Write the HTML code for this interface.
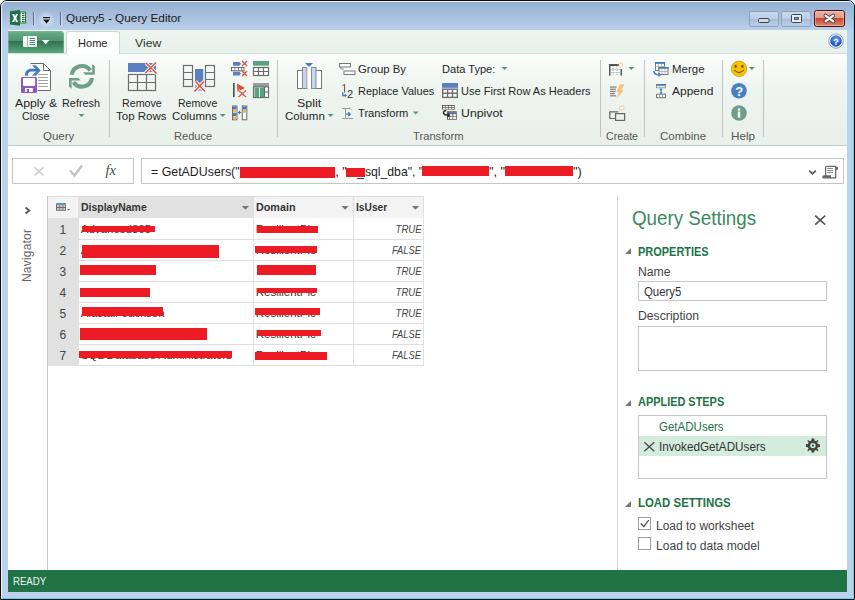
<!DOCTYPE html>
<html><head><meta charset="utf-8"><style>
*{margin:0;padding:0;box-sizing:border-box}
html,body{width:855px;height:600px;overflow:hidden;background:#fff;font-family:"Liberation Sans",sans-serif;color:#222}
.a{position:absolute}
.t{position:absolute;white-space:nowrap;line-height:1}
</style></head><body>
<div class="a" style="left:0px;top:0px;width:855px;height:600px;background:#bcd1ea;border:1px solid #0a0a0a;border-radius:7px 7px 0 0"></div>
<div class="a" style="left:1px;top:1px;width:853px;height:598px;border-left:1px solid #eef4fb;border-top:1px solid #eef4fb;border-right:1px solid #45dcfa;border-bottom:1px solid #45dcfa;border-radius:6px 6px 0 0"></div>
<div class="a" style="left:2px;top:2px;width:851px;height:28px;background:linear-gradient(#94afd1,#bad0ea);border-radius:5px 5px 0 0"></div>
<div class="a" style="left:8px;top:30px;width:839px;height:23px;background:linear-gradient(#ecf5ef,#e7f0ea)"></div>
<div class="a" style="left:8px;top:53px;width:839px;height:93px;background:linear-gradient(#fbfdfc,#eef4f0 40%,#e9f0eb);border-top:1px solid #cfe2d5;border-bottom:1px solid #b6d3bf"></div>
<div class="a" style="left:8px;top:146px;width:839px;height:424px;background:#fff"></div>
<div class="a" style="left:8px;top:570px;width:839px;height:22px;background:#217346"></div>
<div id="t0" class="t" style="left:65.90px;top:12.20px;font-size:11.7px;color:#1a1a1a;font-weight:normal;font-style:normal;transform:scaleX(1.0082);transform-origin:0 0;">Query5 - Query Editor</div>
<div class="a" style="left:66px;top:31px;width:54px;height:23px;background:#fff;border:1px solid #c8dccf;border-bottom:none;border-radius:3px 3px 0 0"></div>
<div id="t1" class="t" style="left:77.90px;top:38.07px;font-size:11.5px;color:#262626;font-weight:normal;font-style:normal;transform:scaleX(0.9611);transform-origin:0 0;">Home</div>
<div id="t2" class="t" style="left:135.20px;top:38.07px;font-size:11.5px;color:#333;font-weight:normal;font-style:normal;transform:scaleX(1.0640);transform-origin:0 0;">View</div>
<div id="t3" class="t" style="left:15.20px;top:97.99px;font-size:11px;color:#262626;font-weight:normal;font-style:normal;transform:scaleX(1.1102);transform-origin:0 0;">Apply &amp;</div>
<div id="t4" class="t" style="left:22.10px;top:110.99px;font-size:11px;color:#262626;font-weight:normal;font-style:normal;transform:scaleX(0.9766);transform-origin:0 0;">Close</div>
<div id="t5" class="t" style="left:62.10px;top:97.99px;font-size:11px;color:#262626;font-weight:normal;font-style:normal;transform:scaleX(0.9882);transform-origin:0 0;">Refresh</div>
<div id="t6" class="t" style="left:43.10px;top:131.29px;font-size:11px;color:#555;font-weight:normal;font-style:normal;transform:scaleX(1.0456);transform-origin:0 0;">Query</div>
<div id="t7" class="t" style="left:121.90px;top:97.99px;font-size:11px;color:#262626;font-weight:normal;font-style:normal;transform:scaleX(0.9705);transform-origin:0 0;">Remove</div>
<div id="t8" class="t" style="left:116.40px;top:110.99px;font-size:11px;color:#262626;font-weight:normal;font-style:normal;transform:scaleX(1.0442);transform-origin:0 0;">Top Rows</div>
<div id="t9" class="t" style="left:177.80px;top:97.99px;font-size:11px;color:#262626;font-weight:normal;font-style:normal;transform:scaleX(0.9580);transform-origin:0 0;">Remove</div>
<div id="t10" class="t" style="left:172.20px;top:110.99px;font-size:11px;color:#262626;font-weight:normal;font-style:normal;transform:scaleX(1.0350);transform-origin:0 0;">Columns</div>
<div id="t11" class="t" style="left:173.80px;top:131.29px;font-size:11px;color:#555;font-weight:normal;font-style:normal;transform:scaleX(1.0073);transform-origin:0 0;">Reduce</div>
<div id="t12" class="t" style="left:296.90px;top:97.99px;font-size:11px;color:#262626;font-weight:normal;font-style:normal;transform:scaleX(1.1266);transform-origin:0 0;">Split</div>
<div id="t13" class="t" style="left:285.00px;top:110.99px;font-size:11px;color:#262626;font-weight:normal;font-style:normal;transform:scaleX(1.0510);transform-origin:0 0;">Column</div>
<div id="t14" class="t" style="left:358.40px;top:64.49px;font-size:11px;color:#262626;font-weight:normal;font-style:normal;transform:scaleX(1.0334);transform-origin:0 0;">Group By</div>
<div id="t15" class="t" style="left:358.40px;top:86.19px;font-size:11px;color:#262626;font-weight:normal;font-style:normal;transform:scaleX(1.0007);transform-origin:0 0;">Replace Values</div>
<div id="t16" class="t" style="left:358.40px;top:108.19px;font-size:11px;color:#262626;font-weight:normal;font-style:normal;transform:scaleX(1.0138);transform-origin:0 0;">Transform</div>
<div id="t17" class="t" style="left:441.70px;top:64.49px;font-size:11px;color:#262626;font-weight:normal;font-style:normal;transform:scaleX(1.0056);transform-origin:0 0;">Data Type:</div>
<div id="t18" class="t" style="left:460.80px;top:86.19px;font-size:11px;color:#262626;font-weight:normal;font-style:normal;transform:scaleX(1.0047);transform-origin:0 0;">Use First Row As Headers</div>
<div id="t19" class="t" style="left:460.80px;top:108.19px;font-size:11px;color:#262626;font-weight:normal;font-style:normal;transform:scaleX(1.1182);transform-origin:0 0;">Unpivot</div>
<div id="t20" class="t" style="left:412.60px;top:131.29px;font-size:11px;color:#555;font-weight:normal;font-style:normal;transform:scaleX(1.0179);transform-origin:0 0;">Transform</div>
<div id="t21" class="t" style="left:606.30px;top:131.29px;font-size:11px;color:#555;font-weight:normal;font-style:normal;transform:scaleX(0.9706);transform-origin:0 0;">Create</div>
<div id="t22" class="t" style="left:671.80px;top:64.49px;font-size:11px;color:#262626;font-weight:normal;font-style:normal;transform:scaleX(1.0431);transform-origin:0 0;">Merge</div>
<div id="t23" class="t" style="left:671.80px;top:86.19px;font-size:11px;color:#262626;font-weight:normal;font-style:normal;transform:scaleX(1.0907);transform-origin:0 0;">Append</div>
<div id="t24" class="t" style="left:659.90px;top:131.29px;font-size:11px;color:#555;font-weight:normal;font-style:normal;transform:scaleX(1.0455);transform-origin:0 0;">Combine</div>
<div id="t25" class="t" style="left:730.50px;top:131.29px;font-size:11px;color:#555;font-weight:normal;font-style:normal;transform:scaleX(1.0677);transform-origin:0 0;">Help</div>
<div class="a" style="left:109px;top:60px;width:1px;height:77px;background:#bec4c1"></div>
<div class="a" style="left:277px;top:60px;width:1px;height:77px;background:#bec4c1"></div>
<div class="a" style="left:600px;top:60px;width:1px;height:77px;background:#bec4c1"></div>
<div class="a" style="left:644px;top:60px;width:1px;height:77px;background:#bec4c1"></div>
<div class="a" style="left:722px;top:60px;width:1px;height:77px;background:#bec4c1"></div>
<div class="a" style="left:763px;top:60px;width:1px;height:77px;background:#bec4c1"></div>
<div class="a" style="left:12px;top:158px;width:122px;height:26px;border:1px solid #c6c6c6;background:#fff"></div>
<div class="a" style="left:141px;top:158px;width:703px;height:26px;border:1px solid #c6c6c6;background:#fff"></div>
<div id="t26" class="t" style="left:151.40px;top:165.96px;font-size:12.8px;color:#1e1e1e;font-weight:normal;font-style:normal;transform:scaleX(0.9668);transform-origin:0 0;">= GetADUsers(&quot;</div>
<div id="t27" class="t" style="left:335.20px;top:165.96px;font-size:12.8px;color:#1e1e1e;font-weight:normal;font-style:normal;">, &quot;</div>
<div id="t28" class="t" style="left:356.90px;top:165.96px;font-size:12.8px;color:#1e1e1e;font-weight:normal;font-style:normal;">_</div>
<div id="t29" class="t" style="left:364.50px;top:165.96px;font-size:12.8px;color:#1e1e1e;font-weight:normal;font-style:normal;transform:scaleX(0.9519);transform-origin:0 0;">sql_dba&quot;, &quot;</div>
<div id="t30" class="t" style="left:488.90px;top:165.96px;font-size:12.8px;color:#1e1e1e;font-weight:normal;font-style:normal;">&quot;, &quot;</div>
<div id="t31" class="t" style="left:573.00px;top:165.96px;font-size:12.8px;color:#1e1e1e;font-weight:normal;font-style:normal;">&quot;)</div>
<div class="a" style="left:240px;top:167px;width:95px;height:11px;background:#ed1c24"></div>
<div class="a" style="left:346px;top:168px;width:19px;height:8.5px;background:#ed1c24"></div>
<div class="a" style="left:422px;top:166px;width:67px;height:10px;background:#ed1c24"></div>
<div class="a" style="left:505px;top:166px;width:68px;height:10px;background:#ed1c24"></div>
<div class="a" style="left:47px;top:196px;width:1px;height:374px;background:#c6c6c6"></div>
<div class="a" style="left:48px;top:196px;width:376px;height:1px;background:#dcdcdc"></div>
<div class="a" style="left:48px;top:197px;width:30px;height:21px;background:#f3f3f3"></div>
<div class="a" style="left:78px;top:197px;width:175px;height:21px;background:#e1e1e1"></div>
<div class="a" style="left:254px;top:197px;width:170px;height:21px;background:#f3f3f3"></div>
<div class="a" style="left:48px;top:218px;width:31px;height:148px;background:#e1e1e1"></div>
<div class="a" style="left:79px;top:239px;width:345px;height:1px;background:#dedede"></div>
<div class="a" style="left:79px;top:260px;width:345px;height:1px;background:#dedede"></div>
<div class="a" style="left:79px;top:281px;width:345px;height:1px;background:#dedede"></div>
<div class="a" style="left:79px;top:302px;width:345px;height:1px;background:#dedede"></div>
<div class="a" style="left:79px;top:323px;width:345px;height:1px;background:#dedede"></div>
<div class="a" style="left:79px;top:344px;width:345px;height:1px;background:#dedede"></div>
<div class="a" style="left:79px;top:365px;width:345px;height:1px;background:#dedede"></div>
<div class="a" style="left:253px;top:197px;width:1px;height:168px;background:#e0e0e0"></div>
<div class="a" style="left:353px;top:197px;width:1px;height:168px;background:#e0e0e0"></div>
<div class="a" style="left:423px;top:197px;width:1px;height:168px;background:#e0e0e0"></div>
<div id="t32" class="t" style="left:80.80px;top:202.49px;font-size:11px;color:#333;font-weight:bold;font-style:normal;transform:scaleX(0.9515);transform-origin:0 0;">DisplayName</div>
<div id="t33" class="t" style="left:255.70px;top:202.49px;font-size:11px;color:#333;font-weight:bold;font-style:normal;transform:scaleX(0.9783);transform-origin:0 0;">Domain</div>
<div id="t34" class="t" style="left:355.90px;top:202.49px;font-size:11px;color:#333;font-weight:bold;font-style:normal;transform:scaleX(0.9280);transform-origin:0 0;">IsUser</div>
<div id="t35" class="t" style="left:59.40px;top:224.24px;font-size:12px;color:#444;font-weight:normal;font-style:normal;">1</div>
<div id="t36" class="t" style="right:433.60px;top:223.73px;font-size:11.3px;color:#444;font-weight:normal;font-style:italic;transform:scaleX(0.8538);transform-origin:100% 0;">TRUE</div>
<div id="t37" class="t" style="left:80.80px;top:224.37px;font-size:11.5px;color:#333;font-weight:normal;font-style:normal;">Advanced365</div>
<div id="t38" class="t" style="left:255.70px;top:224.37px;font-size:11.5px;color:#333;font-weight:normal;font-style:normal;">ResilientPlc</div>
<div id="t39" class="t" style="left:59.40px;top:245.24px;font-size:12px;color:#444;font-weight:normal;font-style:normal;">2</div>
<div id="t40" class="t" style="right:433.60px;top:244.73px;font-size:11.3px;color:#444;font-weight:normal;font-style:italic;transform:scaleX(0.8251);transform-origin:100% 0;">FALSE</div>
<div id="t41" class="t" style="left:80.80px;top:245.37px;font-size:11.5px;color:#333;font-weight:normal;font-style:normal;">Administrator of domain</div>
<div id="t42" class="t" style="left:255.70px;top:245.37px;font-size:11.5px;color:#333;font-weight:normal;font-style:normal;">ResilientPlc</div>
<div id="t43" class="t" style="left:59.40px;top:266.24px;font-size:12px;color:#444;font-weight:normal;font-style:normal;">3</div>
<div id="t44" class="t" style="right:433.60px;top:265.73px;font-size:11.3px;color:#444;font-weight:normal;font-style:italic;transform:scaleX(0.8538);transform-origin:100% 0;">TRUE</div>
<div id="t45" class="t" style="left:80.80px;top:266.37px;font-size:11.5px;color:#333;font-weight:normal;font-style:normal;"></div>
<div id="t46" class="t" style="left:255.70px;top:266.37px;font-size:11.5px;color:#333;font-weight:normal;font-style:normal;"></div>
<div id="t47" class="t" style="left:59.40px;top:287.24px;font-size:12px;color:#444;font-weight:normal;font-style:normal;">4</div>
<div id="t48" class="t" style="right:433.60px;top:286.73px;font-size:11.3px;color:#444;font-weight:normal;font-style:italic;transform:scaleX(0.8538);transform-origin:100% 0;">TRUE</div>
<div id="t49" class="t" style="left:80.80px;top:287.37px;font-size:11.5px;color:#333;font-weight:normal;font-style:normal;"></div>
<div id="t50" class="t" style="left:255.70px;top:287.37px;font-size:11.5px;color:#333;font-weight:normal;font-style:normal;">ResilientPlc</div>
<div id="t51" class="t" style="left:59.40px;top:308.24px;font-size:12px;color:#444;font-weight:normal;font-style:normal;">5</div>
<div id="t52" class="t" style="right:433.60px;top:307.73px;font-size:11.3px;color:#444;font-weight:normal;font-style:italic;transform:scaleX(0.8538);transform-origin:100% 0;">TRUE</div>
<div id="t53" class="t" style="left:80.80px;top:308.37px;font-size:11.5px;color:#333;font-weight:normal;font-style:normal;">Alastair Jackson</div>
<div id="t54" class="t" style="left:255.70px;top:308.37px;font-size:11.5px;color:#333;font-weight:normal;font-style:normal;">ResilientPlc</div>
<div id="t55" class="t" style="left:59.40px;top:329.24px;font-size:12px;color:#444;font-weight:normal;font-style:normal;">6</div>
<div id="t56" class="t" style="right:433.60px;top:328.73px;font-size:11.3px;color:#444;font-weight:normal;font-style:italic;transform:scaleX(0.8251);transform-origin:100% 0;">FALSE</div>
<div id="t57" class="t" style="left:80.80px;top:329.37px;font-size:11.5px;color:#333;font-weight:normal;font-style:normal;"></div>
<div id="t58" class="t" style="left:255.70px;top:329.37px;font-size:11.5px;color:#333;font-weight:normal;font-style:normal;">ResilientPlc</div>
<div id="t59" class="t" style="left:59.40px;top:350.24px;font-size:12px;color:#444;font-weight:normal;font-style:normal;">7</div>
<div id="t60" class="t" style="right:433.60px;top:349.73px;font-size:11.3px;color:#444;font-weight:normal;font-style:italic;transform:scaleX(0.8251);transform-origin:100% 0;">FALSE</div>
<div id="t61" class="t" style="left:80.80px;top:350.37px;font-size:11.5px;color:#333;font-weight:normal;font-style:normal;">SQL Database Administrators</div>
<div id="t62" class="t" style="left:255.70px;top:350.37px;font-size:11.5px;color:#333;font-weight:normal;font-style:normal;">ResilientPlc</div>
<div class="a" style="left:82px;top:226px;width:73px;height:6px;background:#ed1c24"></div>
<div class="a" style="left:82px;top:245px;width:137px;height:13px;background:#ed1c24"></div>
<div class="a" style="left:80px;top:265px;width:76px;height:10px;background:#ed1c24"></div>
<div class="a" style="left:80px;top:288px;width:70px;height:9px;background:#ed1c24"></div>
<div class="a" style="left:82px;top:307px;width:81px;height:9px;background:#ed1c24"></div>
<div class="a" style="left:80px;top:328px;width:127px;height:12px;background:#ed1c24"></div>
<div class="a" style="left:79px;top:351px;width:153px;height:7px;background:#ed1c24"></div>
<div class="a" style="left:257px;top:226px;width:61px;height:7px;background:#ed1c24"></div>
<div class="a" style="left:255px;top:246px;width:62px;height:7px;background:#ed1c24"></div>
<div class="a" style="left:257px;top:265px;width:59px;height:10px;background:#ed1c24"></div>
<div class="a" style="left:257px;top:288px;width:60px;height:5px;background:#ed1c24"></div>
<div class="a" style="left:255px;top:308px;width:65px;height:7px;background:#ed1c24"></div>
<div class="a" style="left:258px;top:330px;width:63px;height:6px;background:#ed1c24"></div>
<div class="a" style="left:255px;top:352px;width:72px;height:8px;background:#ed1c24"></div>
<div class="t" style="left:21.3px;top:281.6px;font-size:12px;letter-spacing:.2px;color:#666;transform-origin:0 0;transform:rotate(-90deg)">Navigator</div>
<div class="a" style="left:617px;top:196px;width:1px;height:374px;background:#d4d4d4"></div>
<div id="t63" class="t" style="left:632.40px;top:208.79px;font-size:19.5px;color:#3d8a5c;font-weight:normal;font-style:normal;transform:scaleX(0.9620);transform-origin:0 0;">Query Settings</div>
<div id="t64" class="t" style="left:638.30px;top:245.84px;font-size:12px;color:#217346;font-weight:bold;font-style:normal;transform:scaleX(0.9137);transform-origin:0 0;">PROPERTIES</div>
<div id="t65" class="t" style="left:638.30px;top:266.19px;font-size:12.3px;color:#444;font-weight:normal;font-style:normal;transform:scaleX(0.9935);transform-origin:0 0;">Name</div>
<div class="a" style="left:638px;top:281px;width:189px;height:20px;border:1px solid #c6c6c6;background:#fff"></div>
<div id="t66" class="t" style="left:643.50px;top:286.22px;font-size:12.5px;color:#333;font-weight:normal;font-style:normal;transform:scaleX(0.9103);transform-origin:0 0;">Query5</div>
<div id="t67" class="t" style="left:638.30px;top:309.89px;font-size:12.3px;color:#444;font-weight:normal;font-style:normal;transform:scaleX(0.9932);transform-origin:0 0;">Description</div>
<div class="a" style="left:638px;top:326px;width:189px;height:45px;border:1px solid #c6c6c6;background:#fff"></div>
<div id="t68" class="t" style="left:638.30px;top:396.34px;font-size:12px;color:#217346;font-weight:bold;font-style:normal;transform:scaleX(0.9102);transform-origin:0 0;">APPLIED STEPS</div>
<div class="a" style="left:638px;top:415px;width:189px;height:64px;border:1px solid #c6c6c6;background:#fff"></div>
<div class="a" style="left:639px;top:436px;width:187px;height:20px;background:#d3ecdd"></div>
<div id="t69" class="t" style="left:658.80px;top:421.12px;font-size:12.5px;color:#217346;font-weight:normal;font-style:normal;transform:scaleX(0.9213);transform-origin:0 0;">GetADUsers</div>
<div id="t70" class="t" style="left:658.80px;top:440.92px;font-size:12.5px;color:#333;font-weight:normal;font-style:normal;transform:scaleX(0.9361);transform-origin:0 0;">InvokedGetADUsers</div>
<div id="t71" class="t" style="left:638.30px;top:497.04px;font-size:12px;color:#217346;font-weight:bold;font-style:normal;transform:scaleX(0.9516);transform-origin:0 0;">LOAD SETTINGS</div>
<div class="a" style="left:638px;top:517px;width:13px;height:13px;border:1px solid #a0a0a0;background:#fff"></div>
<div class="a" style="left:638px;top:537px;width:13px;height:13px;border:1px solid #a0a0a0;background:#fff"></div>
<div id="t72" class="t" style="left:656.30px;top:519.72px;font-size:12.5px;color:#444;font-weight:normal;font-style:normal;transform:scaleX(0.9601);transform-origin:0 0;">Load to worksheet</div>
<div id="t73" class="t" style="left:656.30px;top:539.72px;font-size:12.5px;color:#444;font-weight:normal;font-style:normal;transform:scaleX(0.9688);transform-origin:0 0;">Load to data model</div>
<div id="t74" class="t" style="left:13.40px;top:576.49px;font-size:11px;color:#f0f6f2;font-weight:normal;font-style:normal;transform:scaleX(0.8750);transform-origin:0 0;">READY</div>

<svg width="855" height="600" viewBox="0 0 855 600" style="position:absolute;left:0;top:0">
<!-- Excel icon -->
<g>
 <path d="M10 11.2 L20 10 L20 25.8 L10 24.6 Z" fill="#1f7346"/>
 <rect x="19.5" y="11.5" width="6.5" height="12" fill="#1f7346"/>
 <rect x="20.5" y="12.5" width="4.5" height="10" fill="#fff"/>
 <g fill="#1f7346"><rect x="22" y="13" width="2.5" height="1.2"/><rect x="22" y="15" width="2.5" height="1.2"/><rect x="22" y="17" width="2.5" height="1.2"/><rect x="22" y="19" width="2.5" height="1.2"/><rect x="22" y="21" width="2.5" height="1.2"/></g>
 <path d="M12 14 L14.2 14 L15.1 16.3 L16 14 L18 14 L16.2 18 L18.1 22 L16 22 L15.1 19.7 L14.1 22 L12 22 L13.9 18 Z" fill="#fff"/>
</g>
<!-- QAT separators & dropdown -->
<rect x="33" y="12" width="1" height="13" fill="#5c6b7c"/><rect x="34" y="12" width="1" height="13" fill="#dde8f4" opacity=".7"/>
<rect x="60" y="12" width="1" height="13" fill="#5c6b7c"/><rect x="61" y="12" width="1" height="13" fill="#dde8f4" opacity=".7"/>
<defs><radialGradient id="gqat"><stop offset="0" stop-color="#e4eef8" stop-opacity=".8"/><stop offset="1" stop-color="#e4eef8" stop-opacity="0"/></radialGradient></defs><ellipse cx="46.5" cy="19.5" rx="9" ry="9" fill="url(#gqat)"/>
<rect x="43" y="17" width="7" height="1.2" fill="#111"/>
<path d="M43 19.5 L50 19.5 L46.5 23.5 Z" fill="#111"/>
<!-- window buttons -->
<defs>
 <linearGradient id="gbtn" x1="0" y1="0" x2="0" y2="1"><stop offset="0" stop-color="#c9daee"/><stop offset=".5" stop-color="#bccfe7"/><stop offset=".53" stop-color="#a7bedb"/><stop offset="1" stop-color="#bdd1ea"/></linearGradient>
 <linearGradient id="gcls" x1="0" y1="0" x2="0" y2="1"><stop offset="0" stop-color="#efb4a6"/><stop offset=".46" stop-color="#e39a8c"/><stop offset=".48" stop-color="#c6462a"/><stop offset="1" stop-color="#df8a72"/></linearGradient>
 <linearGradient id="gfile" x1="0" y1="0" x2="0" y2="1"><stop offset="0" stop-color="#6aac88"/><stop offset=".45" stop-color="#4f9471"/><stop offset=".47" stop-color="#33714f"/><stop offset="1" stop-color="#5ba87f"/></linearGradient>
 <radialGradient id="ghelp" cx=".5" cy=".35" r=".6"><stop offset="0" stop-color="#6ea6ec"/><stop offset="1" stop-color="#1b4fb3"/></radialGradient>
</defs>
<rect x="749.5" y="11.5" width="29" height="15" rx="2" fill="url(#gbtn)" stroke="#8a9fb9"/>
<rect x="758.5" y="18.5" width="10.5" height="4" rx="1" fill="#d8d8d8" stroke="#3b4656"/>
<rect x="781.5" y="11.5" width="29.5" height="15" rx="2" fill="url(#gbtn)" stroke="#8a9fb9"/>
<rect x="791.5" y="14.5" width="10" height="8" rx="1" fill="#e8eef5" stroke="#3b4656"/>
<rect x="794.5" y="17.5" width="4" height="2" fill="#7b93b3" stroke="#3b4656" stroke-width=".8"/>
<rect x="814.5" y="10.5" width="30" height="16" rx="2.2" fill="url(#gcls)" stroke="#4a1212"/><rect x="815.5" y="11.5" width="28" height="14" rx="1.5" fill="none" stroke="#f6cfc6" stroke-width=".7" opacity=".7"/>
<path d="M825.6 15.6 L833.2 21.2 M833.2 15.6 L825.6 21.2" stroke="#3a3f4c" stroke-width="4" stroke-linecap="round"/>
<path d="M825.6 15.6 L833.2 21.2 M833.2 15.6 L825.6 21.2" stroke="#f6f6f6" stroke-width="2.3" stroke-linecap="round"/>
<!-- help in tab strip -->
<circle cx="836" cy="41" r="7.2" fill="#fff" stroke="#5f8bd0" stroke-width=".8"/>
<circle cx="836" cy="41" r="5.8" fill="url(#ghelp)"/>
<text x="836" y="45" font-family="Liberation Sans" font-weight="bold" font-size="9" fill="#fff" text-anchor="middle">?</text>

<!-- File tab button -->
<path d="M8 31 H60.5 Q64 31 64 34.5 V53 H8 Z" fill="url(#gfile)"/><path d="M8.5 52.5 V31.8 H60.3 Q63.3 31.8 63.3 34.8 V52.5" fill="none" stroke="#8cc5a5" stroke-width=".8" opacity=".7"/>
<rect x="23" y="36" width="14" height="11" rx="1" fill="#f5f8f6"/>
<rect x="27" y="36" width="1" height="11" fill="#9fc3ae"/>
<g fill="#3f8a62"><rect x="29.5" y="38" width="5.5" height="1"/><rect x="29.5" y="40" width="5.5" height="1"/><rect x="29.5" y="42" width="5.5" height="1"/><rect x="29.5" y="44" width="5.5" height="1"/></g>
<path d="M42 40 L49.5 40 L45.75 44.2 Z" fill="#fff"/>

<!-- Apply & Close -->
<path d="M30.5 63.5 L43.5 63.5 L50.5 70.5 L50.5 90.5 L37.5 90.5" fill="#fff" stroke="#6b6b6b"/>
<path d="M43.5 63.5 L43.5 70.5 L50.5 70.5" fill="none" stroke="#6b6b6b"/>
<g fill="#a0a0a0"><rect x="38" y="74" width="10" height="1"/><rect x="38" y="77" width="10" height="1"/><rect x="38" y="80" width="10" height="1"/><rect x="38" y="83" width="10" height="1"/><rect x="38" y="86" width="10" height="1"/></g>
<rect x="21" y="77" width="16" height="16" rx="1.6" fill="#9158b8"/>
<rect x="23" y="78" width="12.2" height="8" rx="1" fill="#fff"/>
<rect x="25" y="88" width="7.8" height="4" fill="#fff"/>
<rect x="26.8" y="89" width="2.2" height="3" fill="#9158b8"/>
<path d="M25 75.7 C25 71 27 68.8 32 68.8 L37 68.8 L37 71.5 L32 71.5 C29.5 71.5 27.8 72.5 27.8 75.7 Z" fill="#3f7cc0"/>
<path d="M32 65.2 L35.7 65.2 L40.8 70.5 L35.7 75.7 L32 75.7 L37 70.5 Z" fill="#3f7cc0"/>

<!-- Refresh -->
<g fill="#6ea08d">
 <g id="rfh">
 <path d="M69.7 74.7 A12.3 12.3 0 0 1 91.98 69.29 L88.62 71.65 A8.2 8.2 0 0 0 73.87 74.7 Z"/>
 <path d="M92.2 63.9 L94.8 66.1 L94.8 74.7 L85.2 74.7 L83.1 72.3 L92.2 72.3 Z"/>
 </g>
 <g transform="rotate(180 81.9 76.35)">
 <path d="M69.7 74.7 A12.3 12.3 0 0 1 91.98 69.29 L88.62 71.65 A8.2 8.2 0 0 0 73.87 74.7 Z"/>
 <path d="M92.2 63.9 L94.8 66.1 L94.8 74.7 L85.2 74.7 L83.1 72.3 L92.2 72.3 Z"/>
 </g>
</g>

<!-- Remove Top Rows -->
<rect x="128" y="63" width="28" height="9" fill="#5b7fc0"/>
<rect x="128.5" y="74.5" width="27" height="16" fill="none" stroke="#6d6d6d" stroke-width="1.2"/>
<path d="M137.5 74.5 V90.5 M146.5 74.5 V90.5 M128.5 82.5 H155.5" stroke="#6d6d6d" stroke-width="1.2"/>
<path d="M145.5 73 L156 62.5 M146 63 L156.5 73.5" stroke="#fff" stroke-width="3.5"/>
<path d="M145.5 73 L156 62.5 M146 63 L156.5 73.5" stroke="#d9533a" stroke-width="1.6"/>

<!-- Remove Columns -->
<g fill="none" stroke="#6d6d6d" stroke-width="1.2">
 <rect x="183.5" y="65.5" width="9" height="21"/><path d="M183.5 72.5 H192.5 M183.5 79.5 H192.5"/>
 <rect x="205.5" y="65.5" width="9" height="21"/><path d="M205.5 72.5 H214.5 M205.5 79.5 H214.5"/>
</g>
<path d="M195 69 L203.3 69 L203.3 81.5 L199.2 84 L195 81.5 Z" fill="#5b7fc0"/>
<path d="M195 85 L203.3 85 L203.3 91 L195 91 Z" fill="#5b7fc0" opacity=".6"/>
<path d="M194.5 91.5 L204 81.5 M195.5 81.5 L205 91.5" stroke="#fff" stroke-width="3.5"/>
<path d="M194.5 91.5 L204 81.5 M195.5 81.5 L205 91.5" stroke="#d9533a" stroke-width="1.6"/>

<!-- small reduce icons -->
<path d="M233 62 L239.5 62 L241 63.8 L239.5 65.7 L233 65.7 Z" fill="#5b7fc0"/>
<path d="M233 71.8 L239.5 71.8 L241 73.7 L239.5 75.6 L233 75.6 Z" fill="#5b7fc0"/>
<rect x="231.5" y="67.5" width="12.5" height="3.3" fill="#fff" stroke="#6d6d6d"/>
<path d="M235 67.5 V70.8 M238.5 67.5 V70.8 M241.5 67.5 V70.8" stroke="#6d6d6d" stroke-width=".8"/>
<path d="M242 61 L247 66 M247 61 L242 66 M242 71 L247 76 M247 71 L242 76" stroke="#d9533a" stroke-width="1.3"/>
<rect x="253" y="61" width="16" height="4.7" fill="#5aa381"/>
<rect x="253.5" y="67.5" width="15" height="8" fill="#fff" stroke="#6b6b6b" stroke-width="1.2"/>
<path d="M258.5 67.5 V75.5 M263.5 67.5 V75.5 M253.5 71.5 H268.5" stroke="#6b6b6b" stroke-width="1.2"/>
<rect x="233" y="83" width="1.7" height="14" fill="#555"/>
<path d="M237 83.5 L245 88 L237.5 92 Z" fill="#d9533a"/>
<path d="M238.5 90.5 L246 97 M246 90.5 L238.5 97" stroke="#fff" stroke-width="3"/>
<path d="M238.5 90.5 L246 97 M246 90.5 L238.5 97" stroke="#d9533a" stroke-width="1.5"/>
<rect x="253" y="83" width="16" height="3.8" fill="#9c9c9c"/>
<rect x="253.5" y="86.8" width="15" height="10.7" fill="#fff" stroke="#6b6b6b" stroke-width="1.2"/>
<rect x="254.5" y="87.5" width="4.6" height="9.5" fill="#5aa381"/>
<rect x="259.9" y="87.5" width="4.6" height="9.5" fill="#5aa381"/>
<path d="M264.5 86.8 V97.5 M264.5 92 H268.5" stroke="#6b6b6b" stroke-width="1.2"/>
<rect x="232.5" y="106" width="4.5" height="13.8" fill="#fff" stroke="#6d6d6d"/>
<rect x="233" y="106.5" width="3.5" height="3" fill="#3f7cc0"/><rect x="233" y="109.8" width="3.5" height="3" fill="#f2b766"/><rect x="233" y="113.1" width="3.5" height="3" fill="#3f7cc0"/><rect x="233" y="116.4" width="3.5" height="3" fill="#f2b766"/>
<rect x="242.3" y="106" width="4.5" height="13.8" fill="#fff" stroke="#6d6d6d"/>
<rect x="242.8" y="106.5" width="3.5" height="3" fill="#3f7cc0"/><rect x="242.8" y="109.8" width="3.5" height="3" fill="#f2b766"/>
<path d="M237.7 112.5 H241.3 M239.5 110.7 V114.3" stroke="#3f7cc0" stroke-width="1.2"/>

<!-- Split Column -->
<rect x="297.5" y="70.5" width="24" height="18" fill="#fff" stroke="#777"/>
<rect x="302.5" y="67.5" width="4.5" height="21" fill="#c5d7ec" stroke="#8a8a8a"/>
<rect x="307.5" y="67" width="3.5" height="22" fill="#fff"/>
<rect x="311.5" y="67.5" width="4.5" height="21" fill="#c5d7ec" stroke="#8a8a8a"/>
<path d="M305 63 L313 63 L309 67 Z" fill="#3f7cc0"/>

<!-- Group By -->
<rect x="339.5" y="63.5" width="11" height="3.5" fill="#fff" stroke="#777"/>
<rect x="344" y="71" width="11" height="3.5" fill="#fff" stroke="#777"/>
<path d="M341 67 V69 H344" fill="none" stroke="#777" stroke-width=".8"/>
<!-- Replace values -->
<path d="M342.3 86 L344.6 84.3 V92.6" fill="none" stroke="#555" stroke-width="1"/>
<text x="346.9" y="97.8" font-family="Liberation Sans" font-size="11" fill="#333">2</text>
<path d="M342.8 92.3 V95.5 H345.2" fill="none" stroke="#3f7cc0" stroke-width="1.3"/>
<path d="M344.8 93.4 L347.1 95.5 L344.8 97.6 Z" fill="#3f7cc0"/>
<!-- Transform -->
<path d="M342 108.5 H350.5 M342 118.5 H353 M345.5 108.5 V118.5" fill="none" stroke="#9a9a9a" stroke-width="1"/>
<path d="M348.3 108.4 Q352.6 107.8 352 111.2" fill="none" stroke="#999" stroke-width=".8" stroke-dasharray="1 .8"/>
<path d="M346 114.2 H349.6 M348.2 112.2 L350.3 114.2 L348.2 116.2" fill="none" stroke="#3f7cc0" stroke-width="1.2"/>

<!-- Data type arrow -->
<path d="M501.5 67 L507.5 67 L504.5 70 Z" fill="#4f9a74"/>
<!-- Use first row as headers -->
<rect x="442" y="83" width="16" height="4.8" fill="#5b7fc0"/>
<rect x="442.7" y="89.2" width="14.6" height="8.2" fill="#fff" stroke="#6d6d6d" stroke-width="1.4"/>
<path d="M447.6 89.2 V97.4 M452.5 89.2 V97.4 M442.7 93.3 H457.3" stroke="#6d6d6d" stroke-width="1.4"/>
<!-- Unpivot -->
<rect x="442" y="105" width="12.8" height="4.6" fill="#666"/>
<g fill="#fff"><rect x="443" y="106" width="2.2" height="1.1"/><rect x="446" y="106" width="2.2" height="1.1"/><rect x="449" y="106" width="2.2" height="1.1"/><rect x="452" y="106" width="2" height="1.1"/>
<rect x="443" y="107.9" width="2.2" height="1.1"/><rect x="446" y="107.9" width="2.2" height="1.1"/><rect x="449" y="107.9" width="2.2" height="1.1"/><rect x="452" y="107.9" width="2" height="1.1"/></g>
<rect x="447" y="111.2" width="9.8" height="8.6" fill="#666"/>
<rect x="449.5" y="112" width="6.5" height="1.3" fill="#5b7fc0"/>
<g fill="#fff"><rect x="449.8" y="114.2" width="2.6" height="2.1"/><rect x="453.3" y="114.2" width="2.6" height="2.1"/><rect x="449.8" y="117" width="2.6" height="2"/><rect x="453.3" y="117" width="2.6" height="2"/><rect x="448" y="117" width="1" height="2"/></g>
<path d="M446.3 110.4 C442.6 110.6 442.2 115 448 115.2" fill="none" stroke="#e8f0eb" stroke-width="3.2"/>
<path d="M446.3 110.4 C442.6 110.6 442.2 115 448 115.2" fill="none" stroke="#333" stroke-width="1.6"/>
<path d="M447.2 112.5 L450.6 115.2 L447.2 117.9 Z" fill="#333"/>

<!-- Create icons -->
<rect x="609" y="64" width="11" height="2" fill="#555"/>
<rect x="609" y="64" width="1.5" height="11.6" fill="#555"/>
<rect x="620.5" y="69" width="1.5" height="6.6" fill="#555"/>
<g stroke="#999" stroke-width=".8" stroke-dasharray="1 1"><path d="M613 66 V75.5 M617 66 V75.5 M610.5 69.5 H620.5 M610.5 72.5 H620.5"/></g>
<g stroke="#f2b36a" stroke-width=".8"><path d="M620.5 62 V68 M617.5 65 H623.5 M618.4 62.9 L622.6 67.1 M622.6 62.9 L618.4 67.1"/></g>
<circle cx="620.5" cy="65" r="1.5" fill="#fff"/>
<path d="M628.3 67 L634.3 67 L631.3 70 Z" fill="#4f9a74"/>
<g fill="#777"><rect x="610" y="86.5" width="6.6" height="1.1"/><rect x="610" y="88.7" width="6" height="1.1"/><rect x="610" y="90.9" width="5.5" height="1.1"/><rect x="610" y="93.1" width="5" height="1.1"/><rect x="610" y="95.3" width="6" height="1.1"/></g>
<path d="M620 84.2 L624.3 84.2 L621.5 90 L624 90 L616.3 98.7 L618.8 92 L616.3 92 Z" fill="#f4c27c"/>
<path d="M618.3 111.8 H609.8 V118.5 H615" fill="none" stroke="#666" stroke-width="1.2"/>
<rect x="615.6" y="113.6" width="9" height="6.8" fill="none" stroke="#666" stroke-width="1.2"/>
<g stroke="#f2b36a" stroke-width=".8"><path d="M621.6 105 V111 M618.6 108 H624.6 M619.5 105.9 L623.7 110.1 M623.7 105.9 L619.5 110.1"/></g>
<circle cx="621.6" cy="108" r="1.5" fill="#fff"/>

<!-- Merge -->
<rect x="655.5" y="62.5" width="9" height="8" fill="#fff" stroke="#777"/>
<rect x="655" y="62" width="10" height="1.8" fill="#3f7cc0"/>
<path d="M658.5 64 V70 M661.5 64 V70 M655.5 66.5 H664.5" stroke="#aaa" stroke-width=".8"/>
<rect x="659" y="67.5" width="9" height="7" fill="#fff" stroke="#777"/>
<rect x="658.5" y="67" width="10" height="1.8" fill="#3f7cc0"/>
<path d="M662 69 V74.5 M665 69 V74.5 M659 71.5 H668" stroke="#aaa" stroke-width=".8"/>
<path d="M653.8 71 C654.2 74 656 75 659.5 74.8" fill="none" stroke="#3f7cc0" stroke-width="1.6"/>
<path d="M658.6 72.5 L661.4 74.8 L658.6 77 Z" fill="#3f7cc0"/>
<!-- Append -->
<rect x="656" y="84" width="10" height="1.8" fill="#3f7cc0"/>
<rect x="656.5" y="85.8" width="9" height="2" fill="#fff" stroke="#888" stroke-width=".8"/>
<rect x="656.5" y="94.2" width="9" height="3.5" fill="#fff" stroke="#777" stroke-width="1"/>
<path d="M659.5 94.2 V97.7 M662.5 94.2 V97.7" stroke="#777" stroke-width=".8"/>
<path d="M661 88 V94" stroke="#3f7cc0" stroke-width="1"/>
<path d="M659.3 89.3 L662.7 89.3 L661 91 Z M659.3 92 L662.7 92 L661 93.8 Z" fill="#3f7cc0"/>

<!-- Help group -->
<circle cx="739" cy="68.8" r="7.7" fill="#f7c300" stroke="#c99c10" stroke-width=".8"/>
<ellipse cx="735.6" cy="66.3" rx="1.1" ry="1.5" fill="#5c4c16"/><ellipse cx="742.4" cy="66.3" rx="1.1" ry="1.5" fill="#5c4c16"/>
<path d="M734.3 70 Q739 75.2 743.7 70" fill="none" stroke="#5c4c16" stroke-width="1.1"/>
<path d="M748.8 67 L754.8 67 L751.8 70 Z" fill="#4f9a74"/>
<circle cx="739" cy="90.8" r="7.8" fill="#4a7fc2"/>
<text x="739.2" y="95.6" font-family="Liberation Sans" font-weight="bold" font-size="13" fill="#fff" text-anchor="middle">?</text>
<circle cx="739" cy="113" r="7.8" fill="#6b9f8b"/>
<rect x="737.8" y="108.5" width="2.4" height="2.2" fill="#fff"/>
<rect x="737.8" y="111.5" width="2.4" height="6.2" fill="#fff"/>

<!-- dropdown arrows on ribbon -->
<path d="M78.5 114 L84.5 114 L81.5 117 Z" fill="#4f9a74"/>
<path d="M219.7 114 L225.7 114 L222.7 117 Z" fill="#4f9a74"/>
<path d="M327.7 114 L333.7 114 L330.7 117 Z" fill="#4f9a74"/>
<path d="M412.7 111.5 L418.7 111.5 L415.7 114.5 Z" fill="#4f9a74"/>

<!-- formula bar icons -->
<path d="M34.5 167.5 L43.5 175.5 M43.5 167.5 L34.5 175.5" stroke="#c4c4c4" stroke-width="1.3"/>
<path d="M70 170.5 L74.5 175.5 L82 165.5" fill="none" stroke="#c4c4c4" stroke-width="2.4"/>
<text x="105.5" y="175" font-family="Liberation Serif" font-style="italic" font-size="14.5" fill="#4a4a4a">fx</text>
<path d="M809.2 170.6 L812.5 173.9 L815.8 170.6" fill="none" stroke="#555" stroke-width="1.7"/>
<path d="M825.6 176 V167.4 Q825.6 166.3 826.7 166.3 H835.7 V177.9 H830.5" fill="#fff" stroke="#666" stroke-width="1.2"/>
<rect x="836" y="167" width="2" height="2.7" fill="#666"/>
<path d="M823.8 175.3 H831 V178.5 H823.8 Q822.2 178.5 822.2 176.9 Q822.2 175.3 823.8 175.3 Z" fill="#666"/>
<g fill="#8a8a8a"><rect x="827.3" y="168" width="5.6" height="1"/><rect x="827.3" y="170" width="5.6" height="1"/><rect x="827.3" y="172" width="5.6" height="1"/></g>

<!-- table corner icon -->
<rect x="56" y="203" width="10" height="1.3" fill="#3aa0d8"/>
<rect x="56" y="204.3" width="10" height="6.5" fill="#6d6d6d"/>
<g fill="#f3f3f3"><rect x="57" y="205.3" width="2.3" height="1.4"/><rect x="60.2" y="205.3" width="2.3" height="1.4"/><rect x="63.4" y="205.3" width="1.8" height="1.4"/><rect x="57" y="208.3" width="2.3" height="1.4"/><rect x="60.2" y="208.3" width="2.3" height="1.4"/><rect x="63.4" y="208.3" width="1.8" height="1.4"/></g>
<path d="M67.2 209 L70 209 L68.6 210.6 Z" fill="#555"/>
<!-- header arrows -->
<path d="M241.8 206 L249 206 L245.4 209.8 Z" fill="#777"/>
<path d="M341.5 206 L348.7 206 L345.1 209.8 Z" fill="#777"/>
<path d="M411.9 206 L419.1 206 L415.5 209.8 Z" fill="#777"/>
<!-- navigator chevron -->
<path d="M25.5 207.5 L29.3 210.5 L25.5 213.5" fill="none" stroke="#555" stroke-width="1.8"/>

<!-- query settings X -->
<path d="M815.2 215.7 L825.2 224.7 M825.2 215.7 L815.2 224.7" stroke="#555" stroke-width="1.7"/>
<!-- triangles -->
<path d="M625 254 L631 254 L631 248 Z" fill="#777"/>
<path d="M625 406 L631 406 L631 400 Z" fill="#777"/>
<path d="M625 507 L631 507 L631 501 Z" fill="#777"/>
<!-- step X -->
<path d="M644.3 442.3 L654.3 451.3 M654.3 442.3 L644.3 451.3" stroke="#505050" stroke-width="1.5"/>
<!-- gear -->
<g transform="translate(812.9 445.6)">
 <path fill="#444" d="M-1.3 -7 L1.3 -7 L1.6 -5 L3.2 -4.3 L4.9 -5.6 L5.6 -4.9 L4.3 -3.2 L5 -1.6 L7 -1.3 L7 1.3 L5 1.6 L4.3 3.2 L5.6 4.9 L4.9 5.6 L3.2 4.3 L1.6 5 L1.3 7 L-1.3 7 L-1.6 5 L-3.2 4.3 L-4.9 5.6 L-5.6 4.9 L-4.3 3.2 L-5 1.6 L-7 1.3 L-7 -1.3 L-5 -1.6 L-4.3 -3.2 L-5.6 -4.9 L-4.9 -5.6 L-3.2 -4.3 L-1.6 -5 Z"/>
 <circle r="2.7" fill="#d3ecdd"/>
 <circle r="1.1" fill="#444"/>
</g>
<!-- checkmark -->
<path d="M640.8 523.3 L643.8 526.6 L648.8 520" fill="none" stroke="#3a3a3a" stroke-width="1.15"/>
</svg>

</body></html>
